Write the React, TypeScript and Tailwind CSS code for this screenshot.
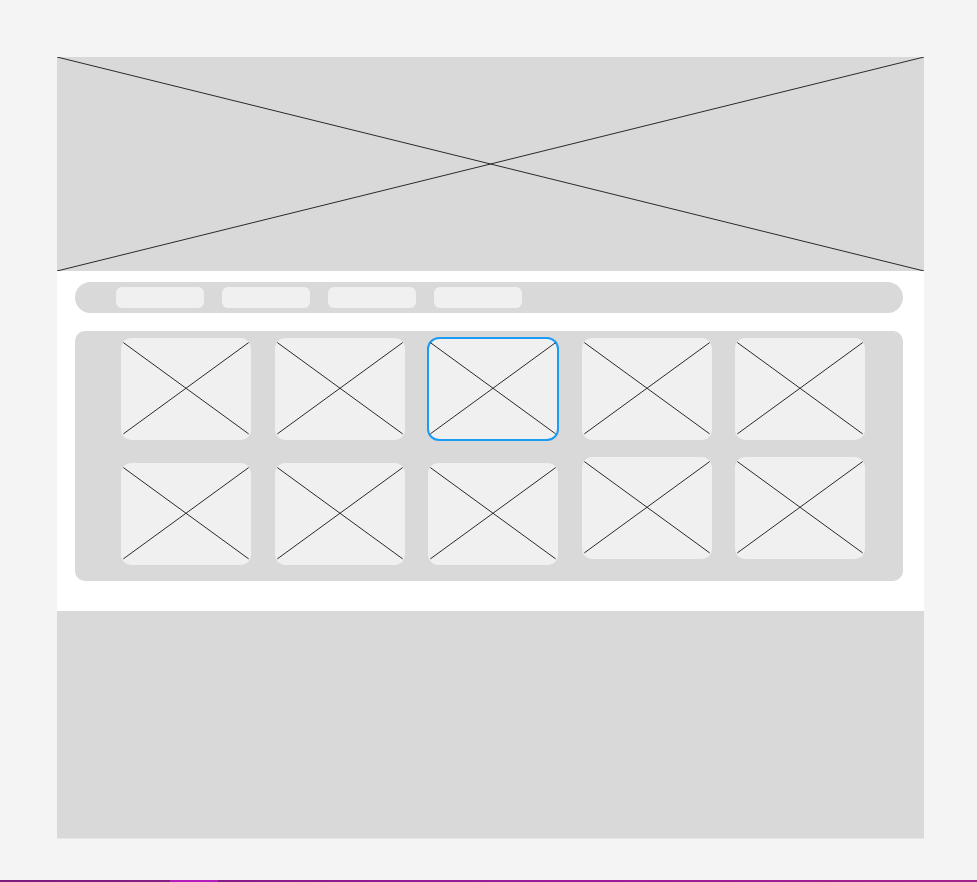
import React from "react";

function XLines({ inset = false }: { inset?: boolean }) {
  return (
    <svg
      className="absolute inset-0 h-full w-full"
      viewBox="0 0 100 100"
      preserveAspectRatio="none"
    >
      {inset ? (
        <>
          <line x1="1.8" y1="4.5" x2="98.2" y2="94" stroke="#2a2a2a" strokeWidth="1" vectorEffect="non-scaling-stroke" />
          <line x1="98.2" y1="4.5" x2="1.8" y2="94" stroke="#2a2a2a" strokeWidth="1" vectorEffect="non-scaling-stroke" />
        </>
      ) : (
        <>
          <line x1="0" y1="0" x2="100" y2="100" stroke="#2a2a2a" strokeWidth="1" vectorEffect="non-scaling-stroke" />
          <line x1="100" y1="0" x2="0" y2="100" stroke="#2a2a2a" strokeWidth="1" vectorEffect="non-scaling-stroke" />
        </>
      )}
    </svg>
  );
}

function Cell({ selected = false, raised = false }: { selected?: boolean; raised?: boolean }) {
  return (
    <div
      className={
        "relative h-[102px] w-[130px] shrink-0 rounded-[10px] bg-[#f0f0f0] " +
        (raised ? "-mt-[6px] " : "") +
        (selected ? "outline-2 outline-[#1a9bf5] -outline-offset-1 rounded-[11px]" : "")
      }
    >
      <XLines inset />
    </div>
  );
}

export default function App() {
  return (
    <div className="flex h-[882px] w-full flex-col bg-[#f4f4f4] pt-[57px]" style={{ fontFamily: "'Liberation Sans', Arial, sans-serif" }}>
      <div className="ml-[57px] flex w-[867px] flex-col bg-white">
        {/* Hero */}
        <div className="relative h-[214px] bg-[#d9d9d9]">
          <XLines />
        </div>

        {/* Middle */}
        <div className="flex flex-col pb-[30px] pl-[18px] pr-[21px] pt-[11px]">
          <div className="flex h-[31px] items-start gap-[18px] rounded-full bg-[#d9d9d9] pl-[41px] pt-[5px]">
            <div className="h-[21px] w-[88px] rounded-[6px] bg-[#f0f0f0]" />
            <div className="h-[21px] w-[88px] rounded-[6px] bg-[#f0f0f0]" />
            <div className="h-[21px] w-[88px] rounded-[6px] bg-[#f0f0f0]" />
            <div className="h-[21px] w-[88px] rounded-[6px] bg-[#f0f0f0]" />
          </div>

          <div className="mt-[18px] flex h-[250px] flex-col gap-[23px] rounded-[10px] bg-[#d9d9d9] pl-[46px] pt-[7px]">
            <div className="flex items-start gap-[23.5px]">
              <Cell />
              <Cell />
              <Cell selected />
              <Cell />
              <Cell />
            </div>
            <div className="flex items-start gap-[23.5px]">
              <Cell />
              <Cell />
              <Cell />
              <Cell raised />
              <Cell raised />
            </div>
          </div>
        </div>

        {/* Bottom block */}
        <div className="h-[228px] border-b border-[#e6e6e6] bg-[#d9d9d9]" />
      </div>

      <div className="relative mt-auto h-[2px] w-full bg-[linear-gradient(to_right,#7b1c7b,#9a1a9a_55%,#a3208a)]">
        <div className="absolute left-[170px] top-0 h-[2px] w-[48px] bg-[#b61cbc]" />
      </div>
    </div>
  );
}
